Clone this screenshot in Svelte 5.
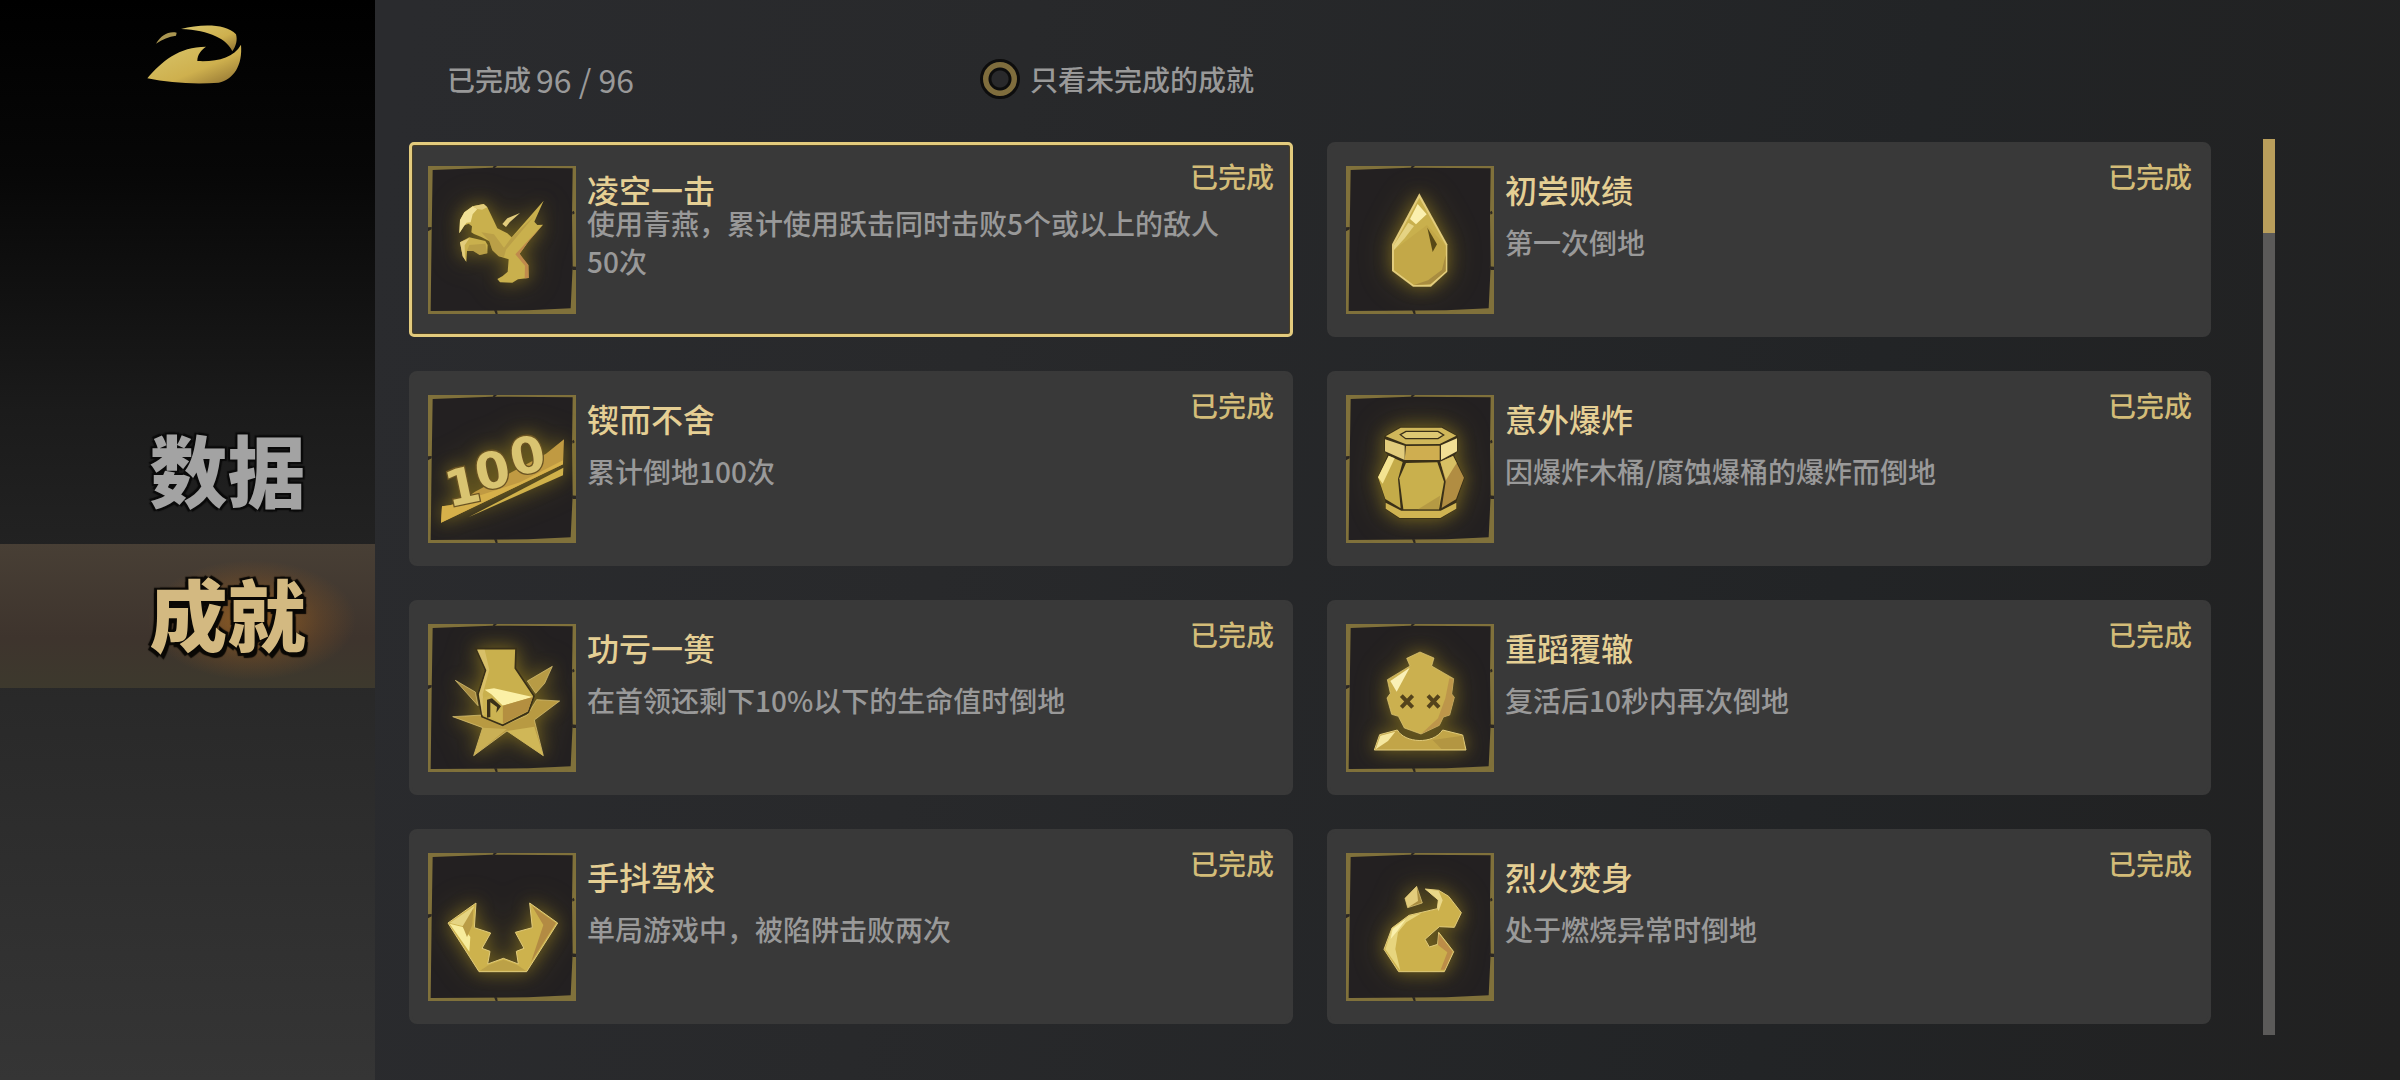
<script>
  const G = "#c9b04d";
  const L = "#e2cc7c";
  const D = "#a88c40";
  const K = "#3a3018";

  const achievements = [
    {
      title: "凌空一击",
      desc: "使用青燕，累计使用跃击同时击败5个或以上的敌人50次",
      done: true,
      top: 33,
      shapes: [
        { d: "M118 235 L120 195 L133 172 L158 154 L191 147 L202 157 L219 192 L232 220 L262 235 L275 247 L371 137 L343 200 L352 210 L369 209 L326 259 L299 296 L306 309 L325 330 L326 369 L294 373 L277 383 L240 382 L232 372 L248 363 L263 350 L266 313 L236 304 L217 286 L208 259 L184 246 L162 237 L154 232 L156 214 L146 206 L134 211 Z", fill: G },
        { d: "M118 235 L120 195 L133 172 L158 154 L172 162 L158 178 L152 202 L140 203 L132 213 Z", fill: "#f1e197" },
        { d: "M158 154 L191 147 L202 157 L186 164 L172 162 Z", fill: L },
        { d: "M184 232 L222 238 L252 278 L275 247 L343 183 L258 284 L252 306 L236 304 L217 286 L208 259 Z", fill: D, opacity: 0.45 },
        { d: "M326 255 L369 209 L326 259 L299 296 L325 330 L326 369 L314 370 L315 332 L286 298 Z", fill: "#c08a4c" },
        { d: "M247 207 L262 190 L300 174 L269 202 L258 216 Z", fill: L },
        { d: "M120 262 L148 247 L196 258 L203 270 L202 295 L179 300 L160 288 L141 288 L139 320 L128 304 Z", fill: G },
        { d: "M120 262 L148 250 L134 271 L135 305 L139 320 L128 304 Z", fill: L },
        { d: "M148 270 L196 266 L202 295 L179 300 L160 288 L141 288 Z", fill: D, opacity: 0.5 },
      ],
    },
    {
      title: "初尝败绩",
      desc: "第一次倒地",
      done: true,
      top: 33,
      shapes: [
        { d: "M244 115 L328 268 L328 350 L279 395 L225 395 L162 348 L162 268 Z", fill: L },
        { d: "M244 128 L323 270 L323 348 L277 388 L228 390 L168 345 L168 270 Z", fill: G },
        { d: "M168 285 L267 210 L323 272 L323 348 L277 388 L228 390 L168 345 Z", fill: "#c3a848" },
        { d: "M168 270 L211 203 L228 213 L200 250 L168 285 Z", fill: "#e5d383" },
        { d: "M216 192 L239 147 L266 178 L234 208 Z", fill: "#fbf0ae" },
        { d: "M268 218 L297 268 L284 291 Z", fill: "#574816" },
        { d: "M323 300 L323 348 L277 388 L228 390 L270 376 L312 344 Z", fill: D },
      ],
    },
    {
      title: "锲而不舍",
      desc: "累计倒地100次",
      done: true,
      top: 30,
      number: true,
      shapes: [
        { d: "M66 364 L110 360 L165 320 L378 206 L432 163 L429 238 L63 413 Z", fill: "#c09a42" },
        { d: "M66 364 L92 360 L300 292 L429 226 L429 238 L63 413 Z", fill: "#d6b04a" },
        { d: "M145 397 L430 248 L429 271 Z", fill: "#d0b14a" },
      ],
    },
    {
      title: "意外爆炸",
      desc: "因爆炸木桶/腐蚀爆桶的爆炸而倒地",
      done: true,
      top: 30,
      shapes: [
        { d: "M139 153 L187 125 L312 125 L359 152 L359 199 L349 212 L380 279 L355 350 L357 371 L308 401 L184 401 L141 372 L142 348 L119 276 L149 209 L139 199 Z", fill: K },
        { d: "M143 154 L188 128 L311 128 L355 152 L305 177 L204 178 Z", fill: "#d0b75a" },
        { d: "M187 149 L204 139 L300 139 L317 150 L300 161 L203 161 Z", fill: "#ddc873", stroke: K, width: 4 },
        { d: "M141 163 L200 182 L200 225 L141 199 Z", fill: L },
        { d: "M204 183 L305 182 L305 225 L200 225 Z", fill: "#cfae50" },
        { d: "M309 181 L357 160 L357 199 L309 225 Z", fill: "#f2df94" },
        { d: "M152 212 L194 231 L180 282 L188 370 L142 342 L120 277 Z", fill: "#c4ab49" },
        { d: "M152 212 L170 220 L134 296 L120 277 Z", fill: "#f3e391" },
        { d: "M204 234 L298 232 L318 290 L303 373 L196 373 L184 280 Z", fill: G },
        { d: "M306 332 L303 373 L240 373 Z", fill: D, opacity: 0.6 },
        { d: "M307 230 L345 213 L378 278 L354 343 L311 369 L323 290 Z", fill: "#b18d42" },
        { d: "M307 230 L345 213 L356 234 L324 285 Z", fill: "#d8c064" },
        { d: "M143 353 L190 377 L308 377 L355 353 L355 371 L307 399 L185 399 L143 371 Z", fill: "#d0b452" },
      ],
    },
    {
      title: "功亏一篑",
      desc: "在首领还剩下10%以下的生命值时倒地",
      done: true,
      top: 27,
      shapes: [
        { d: "M106 196 L166 231 L174 272 Z", fill: D, stroke: L, width: 2 },
        { d: "M397 154 L374 205 L347 235 L322 198 Z", fill: "#b79b45", stroke: L, width: 2 },
        { d: "M98 305 L190 300 L246 333 L322 300 L350 254 L419 258 L343 315 L370 422 L261 348 L161 422 L188 338 Z", fill: "#b89a42", stroke: L, width: 2 },
        { d: "M261 348 L343 335 L370 422 Z", fill: "#d0b757" },
        { d: "M188 338 L261 342 L161 422 Z", fill: "#cab055" },
        { d: "M168 101 L288 101 L286 160 L342 243 L325 292 L248 331 L186 305 L174 238 L197 166 Z", fill: G, stroke: K, width: 5 },
        { d: "M171 104 L194 104 L208 164 L188 238 L194 298 L186 300 L177 238 L199 166 Z", fill: L, opacity: 0.6 },
        { d: "M194 224 L222 220 L338 246 L248 272 L214 238 Z", fill: "#fbf0a6" },
        { d: "M248 272 L338 246 L324 288 L248 326 Z", fill: "#b48f40" },
        { d: "M188 250 L214 240 L248 272 L248 326 L207 304 L207 262 L222 255 L220 270 L230 278 L230 290 L216 290 L216 306 L188 294 Z", fill: "#ccb352" },
        { d: "M201 308 L201 254 L216 250 L243 274 L229 293 L231 276 L211 262 L211 306 Z", fill: K },
      ],
    },
    {
      title: "重蹈覆辙",
      desc: "复活后10秒内再次倒地",
      done: true,
      top: 27,
      shapes: [
        { d: "M206 130 L246 111 L288 129 L281 153 L347 191 L341 237 L349 247 L335 300 L316 306 L304 331 L249 357 L199 339 L181 304 L161 298 L147 249 L157 235 L148 194 L216 153 Z", fill: "#cbb04f", stroke: L, width: 2 },
        { d: "M157 198 L215 158 L176 230 Z", fill: "#faf0b6" },
        { d: "M334 190 L347 191 L341 237 L349 247 L335 300 L316 306 L304 331 L249 357 L300 310 L322 250 Z", fill: "#b78c48", opacity: 0.7 },
        { d: "M190 242 L224 277 M224 242 L190 277 M270 242 L303 277 M303 242 L270 277", fill: "none", stroke: "#54431b", width: 12 },
        { d: "M125 359 L178 345 C200 384 285 390 314 345 L374 360 L384 405 L109 405 Z", fill: "#c2a548", stroke: L, width: 3 },
        { d: "M127 362 L172 350 L150 378 L113 403 Z", fill: "#f5e79f" },
        { d: "M284 375 L374 362 L380 402 L310 402 Z", fill: D, opacity: 0.6 },
      ],
    },
    {
      title: "手抖驾校",
      desc: "单局游戏中，被陷阱击败两次",
      done: true,
      top: 24,
      shapes: [
        { d: "M168 174 L84 234 L177 380 L320 380 L413 234 L329 174 L337 248 L286 262 L312 310 L289 319 L295 357 L250 340 L203 357 L210 319 L186 310 L212 264 L163 248 Z", fill: "#cdb24d", stroke: L, width: 3 },
        { d: "M163 183 L89 234 L140 246 Z", fill: "#e5d482" },
        { d: "M89 236 L128 246 L151 276 L148 320 Z", fill: "#f7ec9c" },
        { d: "M160 190 L157 240 L141 276 L128 244 Z", fill: "#b99c46" },
        { d: "M336 183 L408 234 L333 352 L370 240 Z", fill: "#b38b43" },
        { d: "M250 344 L290 359 L318 377 L180 377 L205 361 Z", fill: D, opacity: 0.45 },
      ],
    },
    {
      title: "烈火焚身",
      desc: "处于燃烧异常时倒地",
      done: true,
      top: 24,
      shapes: [
        { d: "M236 124 L253 174 L209 188 L201 160 Z", fill: D, stroke: L, width: 2 },
        { d: "M236 124 L240 168 L209 188 L201 160 Z", fill: L },
        { d: "M262 132 L302 136 L332 154 L370 203 L349 247 L304 245 L261 283 L274 306 L299 298 L302 262 L347 320 L319 380 L182 380 L138 313 L162 249 L213 211 L298 191 L301 165 Z", fill: "#ccb14c", stroke: L, width: 3 },
        { d: "M162 250 L213 213 L250 205 L205 232 L180 262 L172 312 L187 377 L142 313 Z", fill: "#e7d57e" },
        { d: "M164 252 L204 222 L178 258 L158 282 Z", fill: "#faf0ac" },
        { d: "M262 132 L302 138 L314 166 L302 198 L298 191 L301 165 Z", fill: "#ead889" },
        { d: "M302 266 L344 320 L320 374 L308 374 L328 322 L300 300 Z", fill: "#bc8d48" },
      ],
    },
  ];

  const tabs = ["数据", "成就"];

  let activeTab = $state("成就");
  let selected = $state("凌空一击");
  let onlyUnfinished = $state(false);
  let visible = $derived(
    achievements.filter((a) => !onlyUnfinished || !a.done),
  );
</script>

<div class="page">
  <aside class="sidebar">
    <button type="button" class="back" aria-label="返回">
      <svg viewBox="0 0 300 190" width="100" height="64" aria-hidden="true">
        <defs>
          <linearGradient id="logo-gold" x1="0" y1="0" x2="1" y2="1">
            <stop offset="0" stop-color="#d9c66c" />
            <stop offset="0.6" stop-color="#ceb04e" />
            <stop offset="1" stop-color="#8d6f30" />
          </linearGradient>
        </defs>
        <path
          fill="url(#logo-gold)"
          d="M10 165 C52 115 105 70 186 70 C172 80 160 93 160 113 C218 116 268 104 291 64 C296 125 270 168 224 178 C150 184 75 178 10 165 Z"
        />
        <path fill="url(#logo-gold)" d="M111 17 C170 2 245 0 276 33 C281 50 276 68 265 84 C250 48 198 21 111 17 Z" />
        <path fill="#aa9651" d="M36 61 C52 36 72 23 98 28 L96 37 C74 40 56 48 36 61 Z" />
      </svg>
    </button>
    <nav>
      {#each tabs as tab (tab)}
        <button
          type="button"
          class="tab"
          class:tab--active={activeTab === tab}
          onclick={() => (activeTab = tab)}
        >
          <span>{tab}</span>
        </button>
      {/each}
    </nav>
  </aside>

  <main>
    <header>
      <p class="progress"><span>已完成</span><strong>96 / 96</strong></p>
      <label class="filter">
        <input type="checkbox" bind:checked={onlyUnfinished} />
        只看未完成的成就
      </label>
    </header>

    <div class="content">
      <ul class="list">
        {#each visible as a (a.title)}
          <li>
            <button
              type="button"
              class="card"
              class:card--selected={selected === a.title}
              onclick={() => (selected = a.title)}
            >
              <svg class="icon" viewBox="0 0 444 444" aria-hidden="true">
                <path fill="#80713b" d="M0 0 H444 V444 H0 Z" />
                <path fill="#232021" d="M14 12 L190 5 L434 7 L432 150 L434 300 L428 427 L300 433 L8 435 L11 200 Z" />
                <path
                  fill="#2b2723"
                  d="M192 9 L197 0 L207 0 L198 8 Z M0 184 L11 183 L11 190 L0 196 Z M432 138 L437 134 L440 142 L434 146 Z M428 301 L444 302 L444 312 L434 312 Z M198 432 L207 433 L209 444 L203 444 Z"
                />
                <g class="glow" transform="translate(-24 {-a.top})">
                  {#each a.shapes as s}
                    <path
                      d={s.d}
                      fill={s.fill}
                      opacity={s.opacity}
                      stroke={s.stroke}
                      stroke-width={s.width}
                    />
                  {/each}
                  {#if a.number}
                    <text class="hundred" x="87 177 282" y="367 319 274" rotate="-12">100</text>
                  {/if}
                </g>
              </svg>
              <span class="info">
                <span class="title">{a.title}</span>
                <span class="desc">{a.desc}</span>
              </span>
              {#if a.done}
                <span class="status">已完成</span>
              {/if}
            </button>
          </li>
        {/each}
      </ul>
      <div class="scrollbar"><div class="thumb"></div></div>
    </div>
  </main>
</div>

<style>
  :global(body) {
    margin: 0;
    background: #202123;
  }

  .page {
    display: flex;
    min-height: 100vh;
    font-family: "Noto Sans CJK SC", "Noto Sans", sans-serif;
    font-size: 28px;
    font-weight: 500;
    color: #999;
    background: linear-gradient(100deg, #2a2b2e 16%, #28292b 40%, #222426 75%, #212121 100%);
  }

  button {
    font: inherit;
    color: inherit;
    border: none;
    cursor: pointer;
  }

  .sidebar {
    width: 375px;
    flex-shrink: 0;
    background: linear-gradient(#000 0%, #070707 16%, #1b1b1b 38%, #282828 62%, #353535 100%);
  }

  .back {
    display: block;
    height: 110px;
    padding: 8px 0 0 144px;
    background: none;
  }

  nav {
    display: flex;
    flex-direction: column;
    margin-top: 290px;
  }

  .tab {
    height: 144px;
    padding: 0 0 8px 80px;
    background: none;
    font-size: 78px;
    font-weight: 900;
    line-height: 78px;
    color: #a3a3a3;
    text-shadow:
      -2px -2px 1px #0a0a0a,
      2px -2px 1px #0a0a0a,
      -2px 2px 1px #0a0a0a,
      2px 2px 1px #0a0a0a;
  }

  .tab--active {
    color: #d3b981;
    background:
      radial-gradient(ellipse 104px 60px at 252px 76px, rgba(180, 110, 30, 0.7), rgba(160, 95, 30, 0.25) 65%, transparent),
      linear-gradient(#483f35, #3e342d 65%, #3d392d);
    text-shadow:
      -3px -2px 1px #0a0805,
      3px -2px 1px #0a0805,
      -3px 3px 1px #0a0805,
      3px 5px 1px #0a0805;
  }

  main {
    flex: 1;
    min-width: 0;
    padding: 0 125px 44px 34px;
  }

  header {
    display: flex;
    align-items: center;
    height: 139px;
    box-sizing: border-box;
    padding: 18px 0 0 38px;
    line-height: 40px;
  }

  .progress {
    display: flex;
    gap: 5px;
    width: 533px;
    margin: 0;
  }

  .progress strong {
    font-size: 32px;
    font-weight: 400;
  }

  .filter {
    display: flex;
    align-items: center;
    gap: 10px;
    cursor: pointer;
  }

  .filter input {
    appearance: none;
    width: 40px;
    height: 40px;
    margin: 0;
    border: 3px solid #0d0d0d;
    border-radius: 50%;
    background: radial-gradient(circle, #29292b 8px, #0d0d0d 9px 11px, #7f6d3d 12px);
    cursor: pointer;
  }

  .filter input:checked {
    background: radial-gradient(circle, #e8cf7e 8px, #0d0d0d 9px 11px, #7f6d3d 12px);
  }

  .content {
    display: flex;
    gap: 52px;
  }

  .list {
    flex: 1;
    display: grid;
    grid-template-columns: 1fr 1fr;
    align-content: start;
    gap: 34px;
    margin: 0;
    padding: 3px 0 11px;
    list-style: none;
  }

  .card {
    display: flex;
    align-items: flex-start;
    box-sizing: border-box;
    width: 100%;
    height: 195px;
    padding: 21px 16px 0 16px;
    border: 3px solid #393939;
    border-radius: 8px;
    background: #393939;
    text-align: left;
  }

  .card--selected {
    border-color: #e3cb7d;
    border-radius: 5px;
    box-shadow: inset 0 0 0 1px #4a3f24;
  }

  .icon {
    width: 148px;
    height: 148px;
    flex-shrink: 0;
  }

  .glow {
    filter: drop-shadow(0 0 24px rgba(165, 140, 30, 0.5)) drop-shadow(0 0 44px rgba(150, 125, 25, 0.35));
  }

  .hundred {
    font-family: "DejaVu Sans", sans-serif;
    font-size: 150px;
    font-weight: 700;
    fill: #d9c471;
    stroke: #6b5423;
    stroke-width: 8px;
    paint-order: stroke;
  }

  .info {
    flex: 1;
    display: flex;
    flex-direction: column;
    padding: 8px 24px 0 11px;
  }

  .title {
    font-size: 32px;
    line-height: 30px;
    color: #e5cf94;
  }

  .desc {
    display: flex;
    align-items: center;
    width: 650px;
    height: 76px;
    line-height: 38px;
  }

  .status {
    margin: -10px 0 0 -160px;
    line-height: 40px;
    color: #d3bc78;
  }

  .scrollbar {
    width: 12px;
    background: #5b5a59;
  }

  .thumb {
    height: 94px;
    background: #b99e5b;
  }
</style>
